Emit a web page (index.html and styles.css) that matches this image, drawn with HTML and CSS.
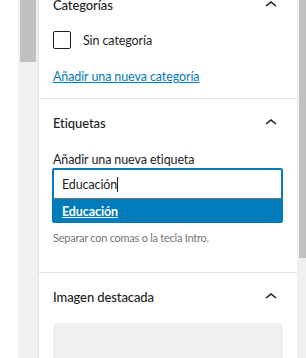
FILE: index.html
```html
<!DOCTYPE html>
<html lang="es">
<head>
  <meta charset="UTF-8">
  <meta name="viewport" content="width=device-width, initial-scale=1.0">
  <title>Etiquetas</title>
  <link rel="stylesheet" href="styles.css">
</head>
<body>
  <div class="gutter"></div>

  <!-- Left editor scrollbar -->
  <div class="track track-left">
    <div class="thumb thumb-left"></div>
  </div>

  <!-- Sidebar panels -->
  <div class="sidebar">
    <div class="panel panel-first">
      <div class="panel-header">
        <span>Categorías</span>
        <svg class="chevron" viewBox="0 0 24 24" width="24" height="24"><path d="M6.5 12.4L12 8l5.5 4.4-.9 1.2L12 10l-4.5 3.6-1-1.2z"/></svg>
      </div>
      <div class="panel-body cats">
        <label class="check-row">
          <span class="checkbox"></span>
          <span>Sin categoría</span>
        </label>
        <a class="add-link" href="#">Añadir una nueva categoría</a>
      </div>
    </div>

    <div class="panel">
      <div class="panel-header">
        <span>Etiquetas</span>
        <svg class="chevron" viewBox="0 0 24 24" width="24" height="24"><path d="M6.5 12.4L12 8l5.5 4.4-.9 1.2L12 10l-4.5 3.6-1-1.2z"/></svg>
      </div>
      <div class="panel-body tags">
        <div class="field-label">Añadir una nueva etiqueta</div>
        <div class="token-field">
          <div class="token-input">Educación<span class="caret"></span></div>
          <ul class="suggestions">
            <li class="suggestion active">Educación</li>
          </ul>
        </div>
        <p class="help">Separar con comas o la tecla Intro.</p>
      </div>
    </div>

    <div class="panel">
      <div class="panel-header">
        <span>Imagen destacada</span>
        <svg class="chevron" viewBox="0 0 24 24" width="24" height="24"><path d="M6.5 12.4L12 8l5.5 4.4-.9 1.2L12 10l-4.5 3.6-1-1.2z"/></svg>
      </div>
      <div class="panel-body image">
        <div class="image-placeholder"></div>
      </div>
    </div>
  </div>

  <!-- Sidebar scrollbar -->
  <div class="track track-right">
    <div class="thumb thumb-right"></div>
  </div>
</body>
</html>
```

FILE: styles.css
```css
body {
  margin: 0;
  height: 358px;
  display: flex;
  overflow: hidden;
  background: #fff;
  font-family: 'Lato', 'Open Sans', sans-serif;
  font-size: 12.5px;
  letter-spacing: -0.1px;
  color: #1e1e1e;
}

.gutter {
  width: 18px;
  flex: none;
}

/* Scrollbars */
.track {
  flex: none;
  background: #f0f0f0;
}

.track-left {
  width: 20px;
  border-right: 1px solid #e0e0e0;
}

.track-right {
  width: 9px;
}

.thumb {
  background: #c1c1c1;
  margin-left: 2px;
}

.thumb-left {
  width: 16px;
  height: 62px;
}

.thumb-right {
  width: 7px;
  height: 258px;
}

/* Sidebar */
.sidebar {
  flex: 1;
  min-width: 0;
}

.panel {
  border-bottom: 1px solid #e0e0e0;
}

.panel-first {
  margin-top: -19px;
}

.panel-header {
  height: 48px;
  display: flex;
  align-items: center;
  justify-content: space-between;
  padding: 0 14px 0 14px;
  font-size: 13px;
  font-weight: 500;
}

.chevron {
  fill: #1e1e1e;
}

.panel-body {
  padding: 0 14px 0 14px;
}

/* Categorías */
.cats {
  padding-top: 2px;
  padding-bottom: 12px;
}

.check-row {
  display: flex;
  align-items: center;
  height: 18px;
}

.checkbox {
  width: 18px;
  height: 18px;
  box-sizing: border-box;
  border: 1.5px solid #1e1e1e;
  border-radius: 2px;
  margin-right: 12px;
}

.add-link {
  display: block;
  margin-top: 19px;
  line-height: 18px;
  color: #007cba;
}

/* Etiquetas */
.tags {
  padding-top: 4px;
  padding-bottom: 26px;
}

.field-label {
  line-height: 17px;
}

.token-field {
  margin-left: -1px;
  border: 2px solid #007cba;
  border-radius: 2px;
}

.token-input {
  height: 28px;
  display: flex;
  align-items: center;
  padding-left: 8px;
  border-bottom: 1px solid #757575;
}

.caret {
  display: inline-block;
  width: 1px;
  height: 15px;
  background: #1e1e1e;
}

.suggestions {
  list-style: none;
  margin: 0;
  padding: 0;
}

.suggestion {
  height: 22px;
  box-sizing: border-box;
  padding: 4px 0 0 8px;
  line-height: 18px;
}

.suggestion.active {
  background: #007cba;
  color: #fff;
  font-weight: 700;
  text-decoration: underline;
}

.help {
  margin: 7px 0 0;
  line-height: 16px;
  font-size: 11px;
  letter-spacing: -0.25px;
  color: #757575;
}

/* Imagen destacada */
.image {
  padding-top: 2px;
  padding-bottom: 16px;
}

.image-placeholder {
  height: 100px;
  background: #f0f0f0;
  border-radius: 2px;
}
```
